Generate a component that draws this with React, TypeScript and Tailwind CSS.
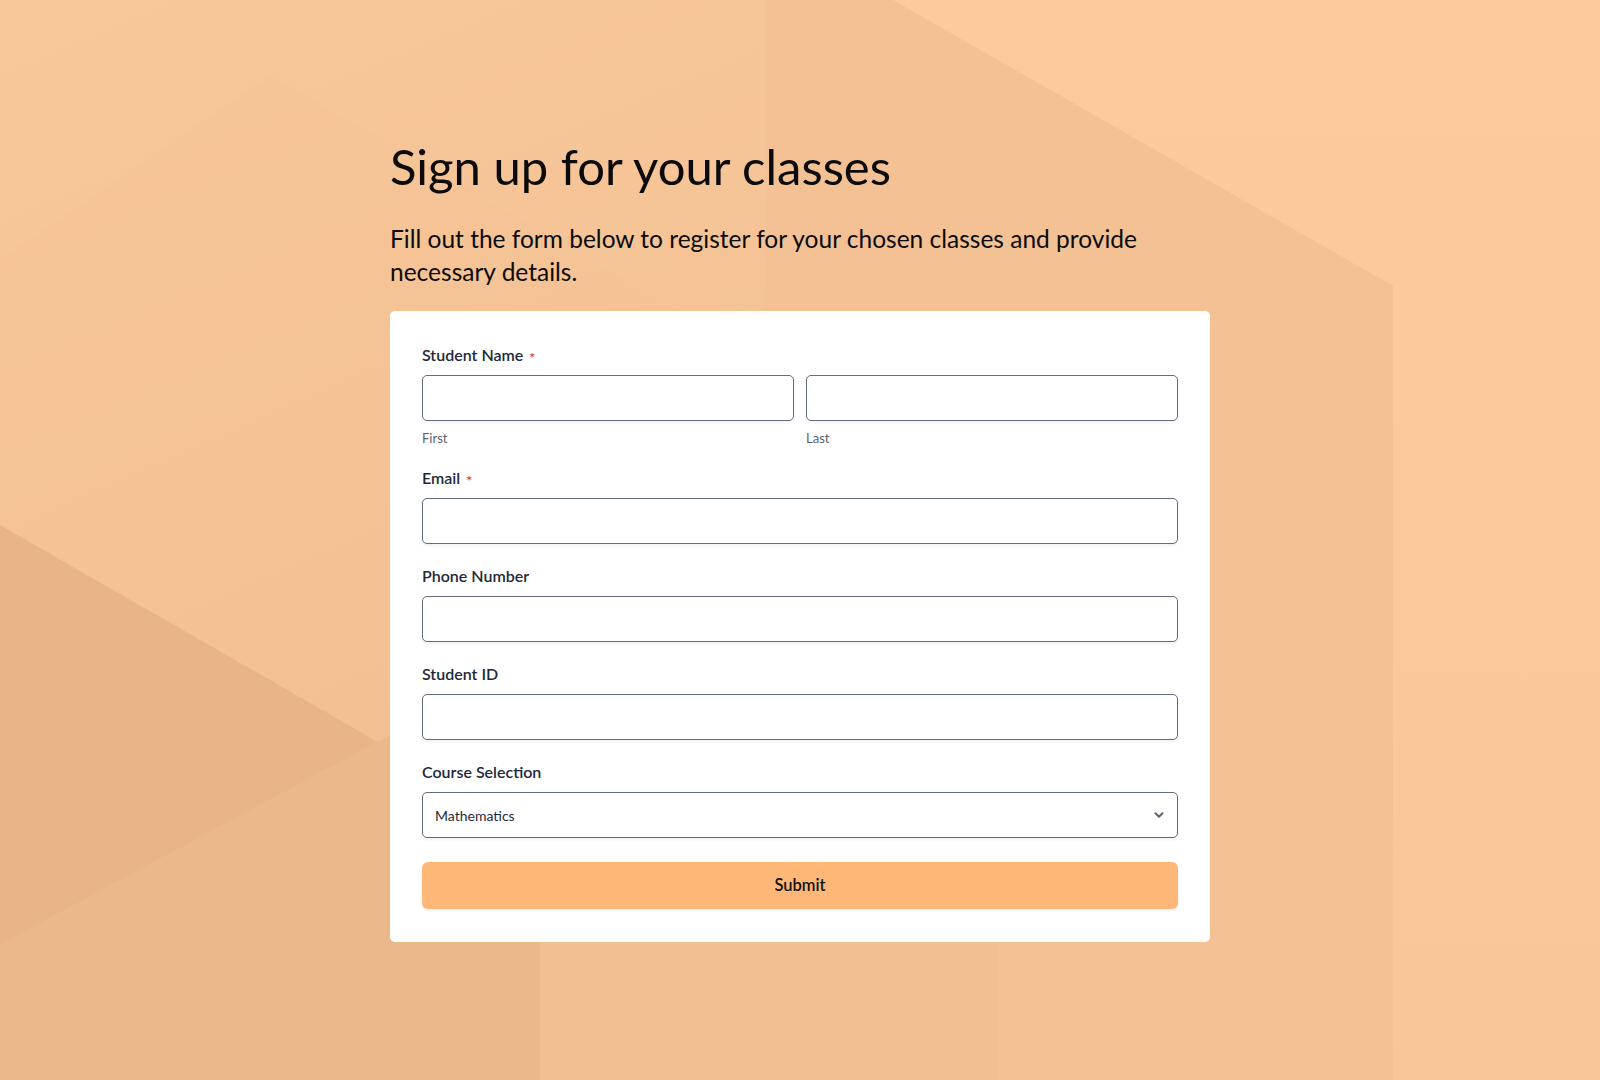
function Background() {
  return (
    <svg
      className="absolute inset-0 h-full w-full"
      viewBox="0 0 1600 1080"
      preserveAspectRatio="none"
      aria-hidden="true"
    >
      <defs>
        <linearGradient id="leftTop" x1="0" y1="0" x2="0.3" y2="1">
          <stop offset="0" stopColor="#f9c89a" />
          <stop offset="1" stopColor="#f1bf91" />
        </linearGradient>
        <linearGradient id="leftTri" x1="0" y1="0" x2="0.3" y2="1">
          <stop offset="0" stopColor="#f7c698" />
          <stop offset="1" stopColor="#f1be90" />
        </linearGradient>
        <linearGradient id="rightTop" x1="0" y1="0" x2="0" y2="1">
          <stop offset="0" stopColor="#fdca9d" />
          <stop offset="1" stopColor="#f8c699" />
        </linearGradient>
      </defs>
      <rect x="0" y="0" width="1600" height="1080" fill="#f3c194" />
      <polygon points="0,0 765,0 765,1080 0,1080" fill="url(#leftTop)" />
      <polygon points="270,75 700,322 700,1080 0,1080 0,260" fill="url(#leftTri)" />
      <polygon points="765,0 893,0 1393,286 1393,1080 765,1080" fill="#f3c194" />
      <polygon points="893,0 1600,0 1600,1080 1393,1080 1393,286" fill="url(#rightTop)" />
      <polygon points="0,525 378,742 0,945" fill="#e9b587" />
      <polygon points="0,945 378,742 540,650 540,1080 0,1080" fill="#ebb88a" />
      <polygon points="540,941 998,941 998,1080 540,1080" fill="#f1bf92" />
      <polygon points="998,941 1393,941 1393,1080 998,1080" fill="#f3c194" />
    </svg>
  );
}

function Label({ text, required }: { text: string; required?: boolean }) {
  return (
    <div className="flex items-center h-6 text-base font-semibold text-[#1e293b]">
      <span>{text}</span>
      {required && <span className="relative top-[3px] ml-1.5 text-[14px] text-[#dc3a22]">*</span>}
    </div>
  );
}

function TextInput() {
  return (
    <input
      type="text"
      className="mt-2 block h-[46px] w-full rounded-[5px] border border-[#646b7b] bg-white px-3 text-sm text-[#1e293b] shadow-[0_2px_3px_rgba(15,23,42,0.06)] outline-none"
    />
  );
}

export default function App() {
  return (
    <div
      className="relative h-[1080px] w-full overflow-hidden"
      style={{ fontFamily: "Lato, 'Noto Sans', sans-serif" }}
    >
      <Background />
      <div className="relative mx-auto w-[820px] pt-[137px]">
        <h1 className="text-[49px] leading-[1.2] font-normal text-[#0b0b0b]">
          Sign up for your classes
        </h1>
        <p className="mt-[26px] text-[24.5px] leading-[33px] text-[#0b0b0b]">
          Fill out the form below to register for your chosen classes and provide necessary details.
        </p>

        <form className="mt-[23px] rounded-[5px] bg-white px-8 pt-8 pb-[33px]">
          <Label text="Student Name" required />
          <div className="grid grid-cols-2 gap-3">
            <div>
              <TextInput />
              <div className="mt-[7px] h-5 text-[13px] leading-5 text-[#5b6270]">First</div>
            </div>
            <div>
              <TextInput />
              <div className="mt-[7px] h-5 text-[13px] leading-5 text-[#5b6270]">Last</div>
            </div>
          </div>

          <div className="mt-[18px]">
            <Label text="Email" required />
            <TextInput />
          </div>

          <div className="mt-5">
            <Label text="Phone Number" />
            <TextInput />
          </div>

          <div className="mt-5">
            <Label text="Student ID" />
            <TextInput />
          </div>

          <div className="mt-5">
            <Label text="Course Selection" />
            <div className="relative mt-2">
              <select
                defaultValue="Mathematics"
                className="block h-[46px] w-full appearance-none rounded-[5px] border border-[#646b7b] bg-white pl-[12px] pr-10 pt-[3px] text-sm text-[#1e293b] shadow-[0_2px_3px_rgba(15,23,42,0.06)] outline-none"
              >
                <option>Mathematics</option>
                <option>Physics</option>
                <option>Chemistry</option>
                <option>Biology</option>
              </select>
              <svg
                className="pointer-events-none absolute right-[12px] top-1/2 -translate-y-1/2"
                width="14"
                height="14"
                viewBox="0 0 24 24"
                fill="none"
                stroke="#5f6675"
                strokeWidth="3.5"
                strokeLinecap="round"
                strokeLinejoin="round"
              >
                <path d="m6 9 6 6 6-6" />
              </svg>
            </div>
          </div>

          <button
            type="button"
            className="mt-6 flex h-[47px] w-full items-center justify-center rounded-[6px] bg-[#feb777] text-[16.5px] font-semibold text-[#111111] shadow-[0_2px_3px_rgba(15,23,42,0.06)]"
          >
            Submit
          </button>
        </form>
      </div>
    </div>
  );
}
